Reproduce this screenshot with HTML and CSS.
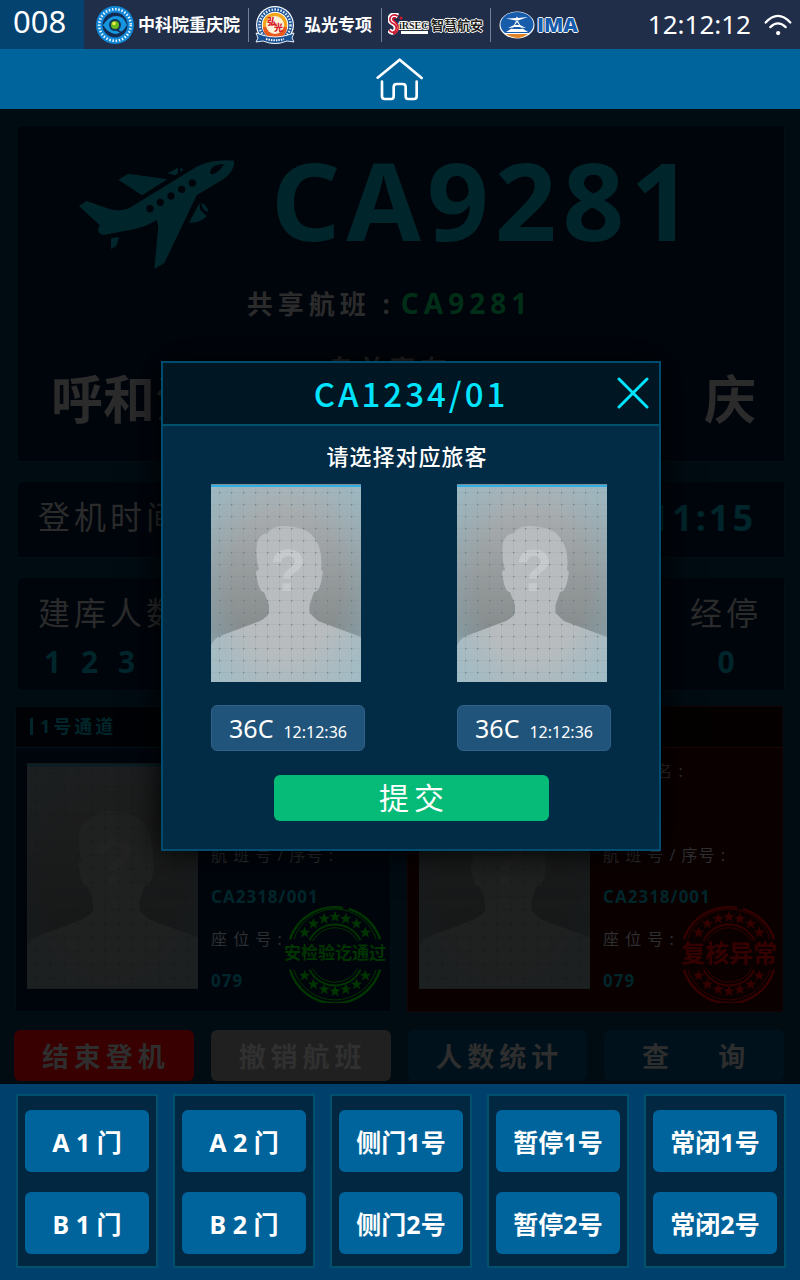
FILE: index.html
```html
<!DOCTYPE html>
<html lang="zh-CN">
<head>
<meta charset="utf-8">
<meta name="viewport" content="width=device-width, initial-scale=1">
<title>登机口闸机</title>
<link rel="stylesheet" href="styles.css">
</head>
<body>
<svg class="defs" width="0" height="0" aria-hidden="true">
  <defs>
    <linearGradient id="photo-bg" x1="0" y1="0" x2="0" y2="1">
      <stop offset="0" stop-color="#b0b4b6"/>
      <stop offset="0.75" stop-color="#868b8c"/>
      <stop offset="1" stop-color="#9aa"/>
    </linearGradient>
    <radialGradient id="photo-tint" cx="0.5" cy="0.5" r="0.72">
      <stop offset="0.5" stop-color="#7fb6c8" stop-opacity="0"/>
      <stop offset="1" stop-color="#8fbccb" stop-opacity="0.6"/>
    </radialGradient>
    <pattern id="photo-dots" x="8" y="8" width="12" height="12" patternUnits="userSpaceOnUse">
      <path d="M0 .5H12M.5 0V12" stroke="#7f9299" stroke-opacity=".14" fill="none"/>
      <rect width="1.3" height="1.3" fill="#5f757d" fill-opacity=".75"/>
    </pattern>
    <symbol id="portrait" viewBox="0 0 150 198">
      <rect width="150" height="198" fill="url(#photo-bg)"/>
      <path fill="#b8bcbe" d="M0 198V162Q2 154 13 150.500L49 137Q58 132 58 128V121L53 108Q50 109 47 100L45 89Q45 86 48 86Q44 72 46 59Q48 50 57 49Q62 41 74 42Q91 43 99 49Q113 62 110 86Q113 86 111 93Q109 108 103 108L98.500 121V129L107 137L150 153V198Z"/>
      <text x="77" y="107" text-anchor="middle" font-family="Liberation Sans, sans-serif" font-size="59" font-weight="700" fill="#c6cacc">?</text>
      <rect width="150" height="198" fill="url(#photo-tint)"/>
      <rect width="150" height="198" fill="url(#photo-dots)"/>
      <rect width="150" height="1" fill="#7b8c94"/>
      <rect y="1" width="150" height="2" fill="#2fb0e4"/>
    </symbol>
    <symbol id="star" viewBox="-5 -5 10 10">
      <path d="M0-5 1.300-1.600 4.800-1.500 2 .700 3 4.200 0 2.100-3 4.200-2 .700-4.800-1.500-1.300-1.600Z"/>
    </symbol>
    <symbol id="stamp" viewBox="0 0 100 100">
      <g fill="none" stroke="currentColor">
        <path stroke-width="2.500" d="M4 35A48 48 0 0 1 58 3M64 4A48 48 0 0 1 96 35M96 66A48 48 0 0 1 4 66"/>
        <path stroke-width="1" d="M8 35A44 44 0 0 1 92 35M92 66A44 44 0 0 1 8 66"/>
        <path stroke-width="2" d="M24 36A29 29 0 0 1 76 36M76 66A29 29 0 0 1 24 66"/>
        <path stroke-width="1" d="M27 37A26 26 0 0 1 73 37M73 65A26 26 0 0 1 27 65"/>
      </g>
      <g fill="currentColor">
        <use href="#star" x="13" y="22" width="12" height="12"/><use href="#star" x="22" y="13" width="12" height="12"/>
        <use href="#star" x="33" y="8" width="12" height="12"/><use href="#star" x="44" y="6" width="12" height="12"/>
        <use href="#star" x="55" y="8" width="12" height="12"/><use href="#star" x="66" y="13" width="12" height="12"/>
        <use href="#star" x="75" y="22" width="12" height="12"/>
        <use href="#star" x="13" y="66" width="12" height="12"/><use href="#star" x="22" y="75" width="12" height="12"/>
        <use href="#star" x="33" y="80" width="12" height="12"/><use href="#star" x="44" y="82" width="12" height="12"/>
        <use href="#star" x="55" y="80" width="12" height="12"/><use href="#star" x="66" y="75" width="12" height="12"/>
        <use href="#star" x="75" y="66" width="12" height="12"/>
      </g>
    </symbol>
  </defs>
</svg>

<div class="screen">
  <header class="topbar">
    <div class="device-no">008</div>
    <div class="partners">
      <div class="partner">
        <svg class="logo-round" width="40" height="40" viewBox="-20 -20 40 40" aria-hidden="true">
          <circle r="19" fill="#1187d6"/>
          <circle r="15.800" fill="none" stroke="#e8f6ff" stroke-width="2.600" stroke-dasharray="1.500 1.700" pathLength="98"/>
          <circle r="12.500" fill="#152c52"/>
          <path d="M-12 0Q-6-9 1-9Q9-9 12 0Q7 9 0 9Q-7 8-12 0Z" fill="#1596de"/>
          <circle r="6" fill="#123458"/>
          <circle r="4" fill="#69b81d"/><circle cx="-1" cy="-1.500" r="1.700" fill="#f4ee4a"/>
          <path d="M2 5 7 8 10 6" stroke="#152c52" stroke-width="1.500" fill="none"/>
        </svg>
        <span class="name-cas">中科院重庆院</span>
      </div>
      <div class="partner">
        <svg class="logo-round" width="40" height="40" viewBox="-20 -20 40 40" aria-hidden="true">
          <circle r="19" fill="#fff"/><circle r="17.800" fill="#174f93"/>
          <circle r="15.500" fill="none" stroke="#dbe7f5" stroke-width="2.500" stroke-dasharray="1.600 1.400"/>
          <circle r="13.300" fill="#fff"/><circle r="12.300" fill="#f3a51c"/>
          <path d="M-12 2A12 12 0 0 0 12 2Z" fill="#ea5a1d"/><circle r="9" fill="#fff3dc"/>
          <text class="emblem-text" x="-8" y="0">弘</text><text class="emblem-text" x="-1" y="6">光</text>
          <path d="M-19 8-13 10Q0 14 13 10L19 8 17 13 19 17 12 16Q0 21-12 16L-19 17-17 13Z" fill="#174f93" stroke="#fff" stroke-width=".900"/>
          <path d="M-9 14Q0 16.500 9 14" stroke="#fff" stroke-width="2" stroke-dasharray="1.500 1" fill="none"/>
        </svg>
        <span class="name-hg">弘光专项</span>
      </div>
      <div class="partner partner-sirsec">
        <svg width="43" height="24" viewBox="0 0 43 24" aria-hidden="true">
          <path d="M10 3Q4 0 2 5Q1 9 6 11Q10 14 7 18Q4 21 1 17" fill="none" stroke="#fff" stroke-width="5"/>
          <text class="sirsec-text" x="11" y="16">iRSEC</text>
          <path d="M13 18H40V21H13Z" fill="#fff"/>
          <path d="M10 3Q4 0 2 5Q1 9 6 11Q10 14 7 18Q4 21 1 17M8 5Q4 4 5 7Q11 11 10 16Q9 20 5 21" fill="none" stroke="#cf1830" stroke-width="1.600"/>
          <circle cx="13" cy="5" r="1.600" fill="#cf1830"/>
        </svg>
        <span class="name-sirsec">智慧航安</span>
      </div>
      <div class="partner partner-ima">
        <svg width="36" height="28" viewBox="0 0 36 28" aria-hidden="true">
          <ellipse cx="18" cy="14" rx="17.500" ry="13.500" fill="#fff"/>
          <path d="M6 22A16.500 12.500 0 1 1 30 22Z" fill="#175cab"/>
          <path d="M7 23H29Q18 31 7 23Z" fill="#e08226"/>
          <path d="M7 7.500 17 7 18 5.500 19 7 29 6 19 9.500H17ZM17 10H19L21 14 27 17 22 16.500 29 21H7L14 16.500 9 17 15 14Z" fill="#fff"/>
          <path d="M18 11 16 14H20ZM15 16H21L24 18H12ZM12 19H24" fill="#175cab"/>
        </svg>
        <span class="name-ima">IMA</span>
      </div>
    </div>
    <time class="clock">12:12:12</time>
    <svg class="wifi" width="28" height="22" viewBox="1180 40 85 67" aria-label="Wi-Fi" role="img">
      <path d="M1185 66Q1222 26 1260 66M1199 80Q1222 57 1246 80" fill="none" stroke="#fff" stroke-width="7" stroke-linecap="round"/>
      <circle cx="1223" cy="98" r="6.500" fill="#fff"/>
    </svg>
  </header>

  <nav class="homebar">
    <a href="#" class="home-link" aria-label="首页">
      <svg width="48" height="44" viewBox="18 170 144 132" aria-hidden="true">
        <path d="M23 232 89 178 155 233M36 244V288Q36 296 44 296H64Q71 296 71 288V260Q71 251 80 251H98Q107 251 107 260V288Q107 296 114 296H132Q140 296 140 288V244" fill="none" stroke="#fff" stroke-width="8" stroke-linecap="round" stroke-linejoin="round"/>
      </svg>
    </a>
  </nav>

  <main class="stage">
    <section class="panel flight">
      <div class="flight-head">
        <svg class="plane" width="155" height="109" viewBox="237 150 465 327" aria-hidden="true">
          <g fill="#00262b">
            <path d="M237 288 260 273 330 298Q360 306 388 294L590 170Q640 146 702 152Q706 180 670 208L590 256 493 459 463 477 475 350 470 330Q440 350 390 360L310 375Q290 370 296 350L301 347Z"/>
            <path d="M355 209 385 191 502 208 426 256ZM502 190 534 173V190L525 196ZM541 172 550 180 541 186ZM333 385 357 381 349 408 333 417ZM567 338 598 280 601 300 621 319Q595 342 567 338ZM603 279Q622 284 625 307Q607 302 603 279Z"/>
          </g>
          <g fill="#00050c">
            <circle cx="450" cy="296" r="11"/><circle cx="481" cy="277" r="11"/><circle cx="513" cy="258" r="11"/><circle cx="545" cy="238" r="11"/><circle cx="577" cy="219" r="11"/>
            <path d="M630 188Q632 164 672 162Q660 184 642 192Q632 194 630 188Z"/>
          </g>
        </svg>
        <h1 class="flight-no">CA9281</h1>
      </div>
      <p class="shared">共享航班 :<span class="shared-no">CA9281</span></p>
      <div class="route">
        <span class="city">呼和浩特</span>
        <span class="via">乌兰察布</span>
        <span class="city city-to">重　庆</span>
      </div>
    </section>

    <section class="panel boarding">
      <span class="label">登机时间</span>
      <span class="boarding-time">11:15</span>
    </section>

    <section class="panel counts">
      <div class="count"><span class="label">建库人数</span><span class="count-value count-spaced">1 2 3</span></div>
      <div class="count count-stop"><span class="label">经停</span><span class="count-value">0</span></div>
    </section>

    <div class="lanes">
      <article class="lane">
        <h2 class="lane-title"><span>1号通道</span></h2>
        <div class="lane-body">
          <svg class="lane-photo" viewBox="0 0 150 198" role="img" aria-label="旅客照片"><use href="#portrait"/></svg>
          <dl class="fields">
            <dt>姓 &emsp;&ensp; 名 :</dt><dd></dd>
            <dt>航 班 号 / 序号 :</dt><dd>CA2318/001</dd>
            <dt>座 位 号 :</dt><dd>079</dd>
          </dl>
        </div>
        <div class="stamp stamp-pass">
          <svg viewBox="0 0 100 100" aria-hidden="true"><use href="#stamp"/></svg>
          <span>安检验讫通过</span>
        </div>
      </article>
      <article class="lane lane-alert">
        <h2 class="lane-title"></h2>
        <div class="lane-body">
          <svg class="lane-photo" viewBox="0 0 150 198" role="img" aria-label="旅客照片"><use href="#portrait"/></svg>
          <dl class="fields">
            <dt>姓 &emsp;&ensp; 名 :</dt><dd></dd>
            <dt>航 班 号 / 序号 :</dt><dd>CA2318/001</dd>
            <dt>座 位 号 :</dt><dd>079</dd>
          </dl>
        </div>
        <div class="stamp stamp-fail">
          <svg viewBox="0 0 100 100" aria-hidden="true"><use href="#stamp"/></svg>
          <span>复核异常</span>
        </div>
      </article>
    </div>

    <div class="actions">
      <button type="button" class="action action-end">结束登机</button>
      <button type="button" class="action action-cancel">撤销航班</button>
      <button type="button" class="action">人数统计</button>
      <button type="button" class="action">查　 询</button>
    </div>

    <div class="overlay">
      <section class="dialog" role="dialog" aria-labelledby="dialog-title">
        <header class="dialog-head">
          <h2 id="dialog-title">CA1234/01</h2>
          <button type="button" class="close" aria-label="关闭">
            <svg width="32" height="32" viewBox="0 0 32 32" aria-hidden="true"><path d="M2 2 30 30M30 2 2 30" stroke="#00e4ff" stroke-width="3" stroke-linecap="round"/></svg>
          </button>
        </header>
        <div class="dialog-body">
          <p class="prompt">请选择对应旅客</p>
          <div class="choices">
            <div class="choice">
              <svg class="choice-photo" viewBox="0 0 150 198" role="img" aria-label="旅客照片"><use href="#portrait"/></svg>
              <button type="button" class="chip"><span class="seat">36C</span><span>12:12:36</span></button>
            </div>
            <div class="choice">
              <svg class="choice-photo" viewBox="0 0 150 198" role="img" aria-label="旅客照片"><use href="#portrait"/></svg>
              <button type="button" class="chip"><span class="seat">36C</span><span>12:12:36</span></button>
            </div>
          </div>
          <button type="button" class="submit">提交</button>
        </div>
      </section>
    </div>
  </main>

  <footer class="gates">
    <div class="gate"><button type="button">A 1 门</button><button type="button">B 1 门</button></div>
    <div class="gate"><button type="button">A 2 门</button><button type="button">B 2 门</button></div>
    <div class="gate"><button type="button">侧门1号</button><button type="button">侧门2号</button></div>
    <div class="gate"><button type="button">暂停1号</button><button type="button">暂停2号</button></div>
    <div class="gate"><button type="button">常闭1号</button><button type="button">常闭2号</button></div>
  </footer>
</div>
</body>
</html>
```

FILE: styles.css
```css
* {
  box-sizing: border-box;
}

body,
h1,
h2,
p,
dl,
dd {
  margin: 0;
}

body {
  background: #000b12;
  color: #fff;
  font-family: "Noto Sans", "Noto Sans CJK SC", sans-serif;
}

button {
  margin: 0;
  padding: 0;
  border: 0;
  color: inherit;
  font-family: inherit;
  cursor: pointer;
}

svg {
  display: block;
  flex: none;
}

.defs {
  position: absolute;
}

.screen {
  display: flex;
  flex-direction: column;
  min-height: 100vh;
}

/* Top bar */
.topbar {
  display: flex;
  align-items: center;
  height: 49px;
  padding-right: 8px;
  background: #202e4a;
}

.device-no {
  width: 84px;
  padding: 0 0 6px 13px;
  background: #044270;
  font-size: 31px;
  line-height: 43px;
}

.partners {
  display: flex;
  padding-left: 11px;
}

.partner {
  display: flex;
  align-items: center;
  gap: 3px;
  height: 34px;
  padding: 0 8px 0 6px;
  border-right: 1px solid #77809a;
}

.partner:first-child {
  padding-left: 0;
}

.partner:last-child {
  border-right: 0;
}

.name-cas,
.name-hg {
  font-size: 17px;
  font-weight: 600;
  line-height: 24px;
}

.name-hg {
  padding: 0 1px 0 6px;
}

.partner-sirsec {
  gap: 0;
  padding-right: 7px;
}

.name-sirsec,
.name-ima {
  text-shadow: 1px 0 #fff, -1px 0 #fff, 0 1px #fff, 0 -1px #fff;
}

.name-sirsec {
  color: #231f20;
  font-size: 13px;
  font-weight: 700;
}

.name-ima {
  color: #175cab;
  font-family: "Open Sans", sans-serif;
  font-size: 20px;
  font-weight: 800;
  line-height: 24px;
}

.partner-ima {
  padding-left: 8px;
  gap: 2px;
}

.emblem-text {
  fill: #d3202a;
  font-size: 9px;
  font-weight: 900;
}

.sirsec-text {
  fill: #231f20;
  stroke: #fff;
  stroke-width: 2px;
  paint-order: stroke;
  font-family: "Liberation Serif", serif;
  font-size: 10px;
  font-weight: 700;
}

.clock {
  margin-left: auto;
  font-size: 26px;
  line-height: 44px;
  padding-bottom: 2px;
}

.wifi {
  margin-left: 13px;
}

/* Home bar */
.homebar {
  display: flex;
  justify-content: center;
  align-items: center;
  height: 60px;
  background: #00649c;
}

/* Dimmed page behind the dialog */
.stage {
  position: relative;
  flex: 1;
  padding: 17px 15px 3px;
  background: #000b12;
  color: #2b2b2b;
}

.panel {
  margin: 0 1px 21px 3px;
  background: #00050c;
  box-shadow: 0 0 0 1px #000e15;
}

.flight {
  padding: 34px 28px 30px 33px;
}

.flight-head {
  display: flex;
  align-items: flex-start;
  gap: 37px;
  padding-left: 28px;
}

.flight-no {
  color: #00262b;
  font-size: 108px;
  font-weight: 700;
  letter-spacing: 6px;
  line-height: 80px;
}

.shared,
.via {
  padding-right: 28px;
  font-size: 26px;
  font-weight: 700;
  letter-spacing: 5px;
  line-height: 40px;
  text-align: center;
}

.shared {
  margin-top: 14px;
}

.shared-no {
  margin-left: 6px;
  color: #002e16;
  font-size: 28px;
}

.route {
  display: grid;
  grid-template-columns: 1fr auto 1fr;
  height: 80px;
  margin-top: 25px;
  margin-bottom: 2px;
}

.city {
  align-self: end;
  font-size: 52px;
  font-weight: 700;
  line-height: 60px;
}

.city-to {
  text-align: right;
}

.label {
  font-size: 32px;
  letter-spacing: 4px;
  line-height: 40px;
}

.boarding {
  display: flex;
  justify-content: space-between;
  align-items: center;
  height: 75px;
  padding: 0 28px 5px 20px;
}

.boarding-time {
  color: #00262b;
  font-size: 36px;
  font-weight: 700;
  letter-spacing: 3px;
}

.counts {
  display: flex;
  justify-content: space-between;
  padding: 15px 22px 0 20px;
  margin-bottom: 17px;
}

.count {
  display: grid;
  line-height: 57px;
}

.count-stop {
  text-align: center;
}

.count-value {
  color: #00262b;
  font-size: 30px;
  font-weight: 700;
}

.count-spaced {
  padding-left: 6px;
  letter-spacing: 6px;
}

.lanes {
  display: grid;
  grid-template-columns: 1fr 1fr;
  gap: 18px;
  padding: 0 3px 0 1px;
}

.lane {
  position: relative;
  background: #00050c;
  box-shadow: 0 0 0 1px #000e15;
}

.lane-title {
  display: flex;
  align-items: center;
  height: 41px;
  padding: 0 14px 2px;
  border-bottom: 1px solid #00141b;
  background: #000205;
  color: #00262b;
  font-size: 18px;
  letter-spacing: 3px;
}

.lane-title span {
  padding-left: 7px;
  border-left: 3px solid #00262b;
  line-height: 17px;
}

.lane-body {
  display: flex;
  gap: 13px;
  padding: 2px 11px 9px;
}

.lane-photo {
  width: 171px;
  height: 226px;
  margin-top: 13px;
  filter: brightness(0.17);
}

.fields {
  line-height: 42px;
  white-space: nowrap;
}

.fields dt {
  height: 42px;
  color: #2d2f31;
  font-size: 16px;
  letter-spacing: 1px;
}

.fields dd {
  height: 42px;
  color: #00262b;
  font-size: 17px;
  font-weight: 700;
  letter-spacing: 1px;
}

.lane-alert {
  background: #0b0000;
  box-shadow: 0 0 0 1px #120404;
}

.lane-alert .lane-title {
  border-color: #1a0808;
  background: #040000;
}

.stamp {
  position: absolute;
  right: 4px;
  bottom: 8px;
  display: grid;
  place-items: center;
  font-weight: 700;
  line-height: 30px;
  font-family: "Liberation Serif", "Noto Sans CJK SC", serif;
}

.stamp > * {
  grid-area: 1 / 1;
}

.stamp svg {
  width: 98px;
  height: 98px;
}

.stamp-pass {
  color: #003400;
  font-size: 17px;
}

.stamp-fail {
  color: #340000;
  font-size: 24px;
}

.actions {
  display: grid;
  grid-template-columns: repeat(4, 1fr);
  gap: 17px;
  margin: 19px 1px 0 -1px;
}

.action {
  height: 51px;
  padding-left: 4px;
  border-radius: 6px;
  background: #00111b;
  color: #2e2e2e;
  font-size: 27px;
  font-weight: 700;
  letter-spacing: 5px;
}

.action-end {
  background: #380000;
}

.action-cancel {
  background: #202020;
  color: #303030;
}

/* Dialog */
.overlay {
  position: absolute;
  inset: 0;
  display: flex;
  justify-content: center;
  align-items: flex-start;
  padding: 252px 0 0 22px;
}

.dialog {
  width: 500px;
  border: 2px solid #004b70;
  background: #022b45;
  box-shadow: 0 0 32px #000;
  color: #fff;
}

.dialog-head {
  position: relative;
  padding: 0 60px;
  border-bottom: 2px solid #00526a;
  background: #001623;
  text-align: center;
}

.dialog-head h2 {
  color: #00e4ff;
  font-family: "Noto Sans CJK SC", sans-serif;
  font-size: 33px;
  font-weight: 500;
  letter-spacing: 3px;
  line-height: 61px;
}

.close {
  position: absolute;
  top: 14px;
  right: 10px;
  background: none;
}

.dialog-body {
  padding: 14px 48px 28px;
}

.prompt {
  padding-right: 8px;
  font-size: 22px;
  font-weight: 500;
  letter-spacing: 1px;
  line-height: 32px;
  text-align: center;
}

.choices {
  display: flex;
  justify-content: space-between;
  margin-top: 12px;
}

.choice {
  display: grid;
  gap: 23px;
}

.choice-photo {
  width: 150px;
  height: 198px;
}

.chip {
  display: flex;
  justify-content: center;
  align-items: baseline;
  gap: 10px;
  width: 154px;
  height: 46px;
  border: 1px solid #30608a;
  border-radius: 6px;
  background: #20547a;
  font-size: 16px;
  line-height: 44px;
}

.seat {
  font-size: 25px;
}

.submit {
  display: block;
  width: 275px;
  height: 46px;
  margin: 24px auto 0;
  padding-left: 6px;
  border-radius: 6px;
  background: #06ba77;
  font-size: 30px;
  letter-spacing: 5px;
  line-height: 44px;
}

/* Gate controls */
.gates {
  display: grid;
  grid-template-columns: repeat(5, 1fr);
  gap: 15px;
  padding: 10px 14px 12px 16px;
  background: #00406c;
}

.gate {
  display: grid;
  gap: 20px;
  padding: 14px 7px 12px;
  border: 2px solid #00506e;
  background: #022740;
}

.gate button {
  height: 62px;
  border-radius: 6px;
  background: #00649c;
  font-size: 25px;
  font-weight: 700;
}
```
